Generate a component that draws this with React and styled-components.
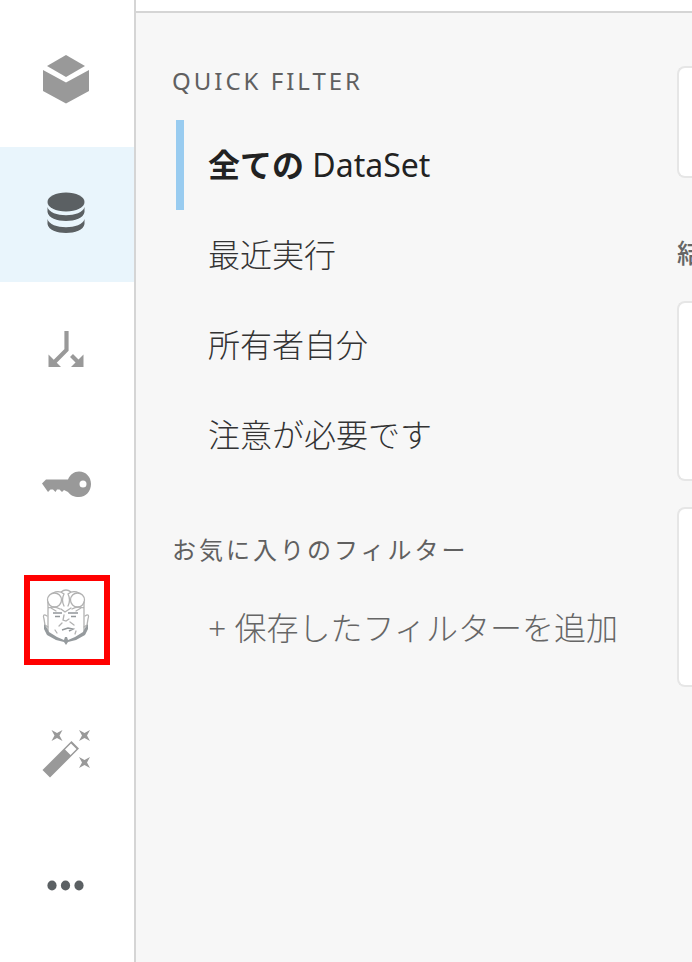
import React from 'react';
import styled, { createGlobalStyle } from 'styled-components';

const GlobalStyle = createGlobalStyle`
  * {
    box-sizing: border-box;
  }

  body {
    margin: 0;
    background-color: #ffffff;
    font-family: "Noto Sans", "Noto Sans CJK JP", sans-serif;
  }
`;

const Page = styled.div`
  display: flex;
  min-height: 100vh;
  overflow: hidden;
`;

const Sidebar = styled.nav`
  display: flex;
  flex-direction: column;
  flex: 0 0 136px;
  padding-top: 12px;
  border-right: 2px solid #d5d5d5;
  background-color: #ffffff;
`;

const NavButton = styled.button`
  display: flex;
  align-items: center;
  justify-content: center;
  width: 100%;
  height: ${({ $short }) => ($short ? '128px' : '135px')};
  padding: 0;
  border: none;
  background-color: ${({ $active }) => ($active ? '#e9f5fc' : 'transparent')};
  color: ${({ $dark }) => ($dark ? '#5b6063' : '#999999')};
  cursor: pointer;
`;

const Highlight = styled.span`
  display: flex;
  align-items: center;
  justify-content: center;
  width: 86px;
  height: 90px;
  border: 6px solid #ff0000;
`;

const IconSvg = styled.svg`
  display: block;
  width: 54px;
  height: 54px;
  overflow: visible;
  fill: currentColor;
`;

const Main = styled.main`
  display: flex;
  flex-direction: column;
  flex: 1;
  min-width: 0;
`;

const TopBar = styled.header`
  height: 13px;
  border-bottom: 2px solid #d5d5d5;
  background-color: #ffffff;
`;

const Content = styled.div`
  display: flex;
  flex: 1;
  background-color: #f7f7f7;
`;

const FilterPanel = styled.aside`
  flex: 0 0 541px;
  padding: 51px 0 0 36px;
`;

const FilterTitle = styled.h2`
  margin: 0 0 ${({ $tight }) => ($tight ? '16px' : '22px')};
  color: #606060;
  font-size: 24px;
  font-weight: 400;
  line-height: 34px;
  letter-spacing: 3px;
`;

const FilterList = styled.ul`
  margin: 0 0 53px;
  padding: 0 0 0 4px;
  list-style: none;
`;

const FilterButton = styled.button`
  display: block;
  width: 100%;
  height: 90px;
  padding: 0 0 0 24px;
  border: none;
  border-left: 8px solid ${({ $selected }) => ($selected ? '#99ccf0' : 'transparent')};
  background: none;
  color: ${({ $selected, $muted }) => ($selected ? '#222222' : $muted ? '#666666' : '#333333')};
  font-family: inherit;
  font-size: 32px;
  font-weight: 300;
  line-height: 46px;
  text-align: left;
  white-space: nowrap;
  cursor: pointer;
`;

const Strong = styled.strong`
  font-weight: 700;
`;

const Regular = styled.span`
  font-weight: 400;
`;

const Results = styled.section`
  flex: 1;
  min-width: 0;
  padding-top: 53px;
`;

const Card = styled.div`
  height: ${({ $small }) => ($small ? '112px' : '180px')};
  margin-bottom: 26px;
  border: 2px solid #e6e6e6;
  border-right: none;
  border-radius: 8px 0 0 8px;
  background-color: #ffffff;
`;

const ResultsTitle = styled.h3`
  margin: 59px 0 32px;
  color: #666666;
  font-size: 26px;
  font-weight: 500;
  line-height: 32px;
  white-space: nowrap;
`;

const Icon = ({ children, viewBox = '0 0 54 54' }) => (
  <IconSvg viewBox={viewBox} aria-hidden="true">
    {children}
  </IconSvg>
);

const CubeIcon = () => (
  <Icon>
    <path d="M26 2 45 13 26 24 7 13Z" />
    <path d="M3 17 26 29.5 49 17V38L26 50.5 3 38Z" />
  </Icon>
);

const DatabaseIcon = () => (
  <Icon>
    <ellipse cx="26" cy="14" rx="18.5" ry="9.5" />
    <path d="M7.5 19C10 30 42 30 44.5 19V24C43 36 9 36 7.5 24Z" />
    <path d="M7.5 31C10 42 42 42 44.5 31V36C43 48 9 48 7.5 36Z" />
  </Icon>
);

const FlowIcon = () => (
  <Icon>
    <path d="M26.5 8V27L14 39.5M31.5 32.5 39 40" fill="none" stroke="currentColor" strokeWidth="4.2" />
    <path d="M8.5 31.5V44H21L16.5 39.5 13 36Z" />
    <path d="M43.5 31.5V44H31L35.5 39.5 39 36Z" />
  </Icon>
);

const KeyIcon = () => (
  <Icon>
    <path
      fillRule="evenodd"
      d="M2 25.5 6 21.5H28C30 16.5 34 13.5 39 13.5C46 13.5 51 19 51 26C51 33 46 39 39 39C34 39 30 37 28 34L26 33 24 32 22 34 19.5 31.5 17 31.5 15.5 34 13 31.5 10.5 31.5 8 34ZM43 22.5A3.5 3.5 0 1 0 43 29.5A3.5 3.5 0 1 0 43 22.5Z"
    />
  </Icon>
);

const FaceIcon = () => (
  <Icon viewBox="1 5 54 54">
    <g fill="none" stroke="#b2b2b2" strokeWidth="1.3" strokeLinecap="round">
      <circle cx="15.5" cy="12" r="7" />
      <circle cx="38.5" cy="12" r="7" />
      <path d="M14 5Q20 2 25 6Q22 12 25 18M40 5Q34 2 29 6Q32 12 29 18M22 4Q27 0 32 4" />
      <path d="M9 14V44M45 14V44M9 20Q16 18 21 21M45 20Q38 18 33 21" />
      <path d="M8 28Q3 25 5 31L6 37 9 39M46 28Q51 25 49 31L48 37 45 39" />
      <path d="M12 20 17 23M42 20 37 23M22 21 26 24 32 20" />
      <path d="M25 27 24 32 27 33 30 31M23 35 20 38M31 34 35 37M16 42 18 45M37 43 36 46" />
    </g>
    <g fill="none" stroke="#93979a" strokeWidth="1.5">
      <path d="M14 25H23M29 25H39M16 28.5H21M32 28.5H37" />
      <path d="M23 42 29 40 34 41 30 43" />
    </g>
    <path
      fill="#959a9d"
      d="M5 36 8 40 10 44 18 49 25 52 26 49H28L29 52 36 49 44 44 46 40 49 36 49 41 46 47 37 52 29 54 27 57 25 54 17 52 8 47 5 41Z"
    />
  </Icon>
);

const WandIcon = () => (
  <Icon>
    <path fillRule="evenodd" d="M31.5 13 39 20.5 10 49.5 2.5 42ZM31 15.5 25 21.5 30.5 27 36.5 21Z" />
    <path d="M11.5 2 17 5 22.5 2 19.5 7.5 22.5 13 17 10 11.5 13 14.5 7.5Z" />
    <path d="M39 2 44.5 5 50 2 47 7.5 50 13 44.5 10 39 13 42 7.5Z" />
    <path d="M39 29 44.5 32 50 29 47 34.5 50 40 44.5 37 39 40 42 34.5Z" />
  </Icon>
);

const MoreIcon = () => (
  <Icon>
    <ellipse cx="12" cy="26.5" rx="4.6" ry="5" />
    <ellipse cx="25.5" cy="26.5" rx="4.6" ry="5" />
    <ellipse cx="39" cy="26.5" rx="4.6" ry="5" />
  </Icon>
);

const App = () => {
  return (
    <>
      <GlobalStyle />
      <Page>
        <Sidebar>
          <NavButton aria-label="Cards">
            <CubeIcon />
          </NavButton>
          <NavButton aria-label="DataSet" $active $dark>
            <DatabaseIcon />
          </NavButton>
          <NavButton aria-label="DataFlow">
            <FlowIcon />
          </NavButton>
          <NavButton aria-label="Accounts">
            <KeyIcon />
          </NavButton>
          <NavButton aria-label="Beast Mode">
            <Highlight>
              <FaceIcon />
            </Highlight>
          </NavButton>
          <NavButton aria-label="Wizard">
            <WandIcon />
          </NavButton>
          <NavButton aria-label="More" $dark $short>
            <MoreIcon />
          </NavButton>
        </Sidebar>
        <Main>
          <TopBar />
          <Content>
            <FilterPanel>
              <FilterTitle>QUICK FILTER</FilterTitle>
              <FilterList>
                <li>
                  <FilterButton $selected>
                    <Strong>全ての</Strong> <Regular>DataSet</Regular>
                  </FilterButton>
                </li>
                <li>
                  <FilterButton>最近実行</FilterButton>
                </li>
                <li>
                  <FilterButton>所有者自分</FilterButton>
                </li>
                <li>
                  <FilterButton>注意が必要です</FilterButton>
                </li>
              </FilterList>
              <FilterTitle $tight>お気に入りのフィルター</FilterTitle>
              <FilterList>
                <li>
                  <FilterButton $muted>+ 保存したフィルターを追加</FilterButton>
                </li>
              </FilterList>
            </FilterPanel>
            <Results>
              <Card $small />
              <ResultsTitle>結</ResultsTitle>
              <Card />
              <Card />
            </Results>
          </Content>
        </Main>
      </Page>
    </>
  );
};

export default App;
